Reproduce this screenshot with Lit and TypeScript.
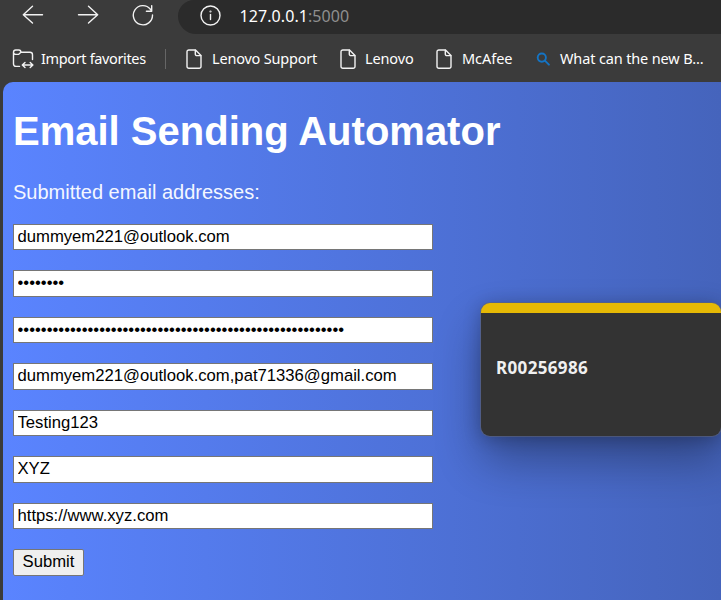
import { LitElement, html, css, svg } from "lit";
import { customElement } from "lit/decorators.js";

const page = svg`<path d="M2.800 1h6.700l5.500 5.500v11a1.800 1.800 0 0 1-1.800 1.800H2.800A1.800 1.800 0 0 1 1 17.500V2.800A1.800 1.800 0 0 1 2.800 1z"/><path d="M9.300 1.200v3.800a1.600 1.600 0 0 0 1.600 1.600h3.900"/>`;

const pageIcon = html`<svg class="line" width="16" height="20" viewBox="0 0 16 20">${page}</svg>`;

@customElement("browser-bar")
export class BrowserBar extends LitElement {
  static styles = css`
    :host { display: block; height: 82px; background: #3b3b3b; color: #fff; font-family: "Noto Sans", "Open Sans", sans-serif; white-space: nowrap; }
    svg { display: block; flex: none; }
    .line { fill: none; stroke: #f2f2f2; stroke-width: 1.4; stroke-linecap: round; stroke-linejoin: round; }
    .nav { display: flex; height: 34px; align-items: flex-start; padding-left: 22px; }
    .nav > svg { margin-top: 4px; }
    .forward { margin-left: 33px; }
    .reload { margin-left: 33px; }
    .address { flex: 1; height: 34px; box-sizing: border-box; margin-left: 24px; background: #2b2b2b; border-radius: 17px 0 0 19px; display: flex; padding: 5px 0 0 22px; }
    .url { margin: -1px 0 0 18.5px; font-size: 16px; line-height: 24px; letter-spacing: 0.08px; }
    .port { color: #8f8f8f; }
    .favorites { display: flex; height: 48px; align-items: center; padding: 1px 0 0 12px; box-sizing: border-box; font-size: 14.5px; line-height: 20px; }
    .favorites span { position: relative; top: -1px; }
    .import { width: 106px; letter-spacing: -0.36px; margin-left: 7px; }
    .favorites .divider { top: 0; width: 1px; height: 20px; margin: 0 20px 0 18px; background: #666; }
    .support { width: 106px; letter-spacing: -0.2px; margin-right: 22px; margin-left: 10px; }
    .lenovo { width: 49px; letter-spacing: -0.14px; margin-right: 22px; margin-left: 9px; }
    .mcafee { width: 51px; letter-spacing: -0.04px; margin-right: 23px; margin-left: 10px; }
    .search { fill: none; stroke: #1474c4; stroke-width: 1.9; stroke-linecap: round; }
    .bing { margin-left: 10px; letter-spacing: -0.14px; }
  `;

  render() {
    return html`
      <div class="nav">
        <svg class="line" width="22" height="22" viewBox="0 0 22 22"><path d="M20.5 10.7H1.3M10.5 2.3l-9.2 8.4 9.2 8.4"/></svg>
        <svg class="line forward" width="22" height="22" viewBox="0 0 22 22"><path d="M1.5 10.7h19.2M11.5 2.3l9.2 8.4-9.2 8.4"/></svg>
        <svg class="line reload" width="22" height="22" viewBox="0 0 22 22"><path d="M20.500 11A9.600 9.600 0 1 1 18.400 5.200L19.700 7M19.700 1.600V7.200H14.400"/></svg>
        <div class="address">
          <svg class="line" width="21" height="21" viewBox="0 0 21 21"><circle cx="10.5" cy="10.5" r="9.5"/><path d="M10.5 9.5v5"/><circle cx="10.5" cy="6.5" r=".4"/></svg>
          <span class="url">127.0.0.1<span class="port">:5000</span></span>
        </div>
      </div>
      <div class="favorites">
        <svg class="line" width="22" height="20" viewBox="0 0 22 20"><path d="M7.500 17.400H4A2.500 2.500 0 0 1 1.500 15V3.200A2.200 2.200 0 0 1 3.700 1H6.800A2.200 2.200 0 0 1 8.900 3.200H18A2.500 2.500 0 0 1 20.500 5.700V10.500M1.500 3.200A2.200 2.200 0 0 0 3.700 5.400H6.500L8.900 3.200M10.500 16H20.700M13 13.400L10.300 16l2.700 2.600M18.200 13.400l2.700 2.600-2.700 2.600"/></svg>
        <span class="import">Import favorites</span>
        <span class="divider"></span>
        ${pageIcon}<span class="support">Lenovo Support</span>
        ${pageIcon}<span class="lenovo">Lenovo</span>
        ${pageIcon}<span class="mcafee">McAfee</span>
        <svg class="search" width="14" height="14" viewBox="0 0 14 14"><circle cx="5.8" cy="5.600" r="4.100"/><path d="M8.900 8.700l4 4"/></svg>
        <span class="bing">What can the new B...</span>
      </div>
    `;
  }
}

@customElement("email-form")
export class EmailForm extends LitElement {
  static styles = css`
    :host { display: block; color: #fff; font-family: "Liberation Sans", Arial, sans-serif; white-space: nowrap; }
    h1 { margin: 0; font-size: 40px; line-height: 46px; }
    p { margin: 27px 0 0; font-size: 20px; line-height: 23px; color: #f4f7ff; }
    form { display: flex; flex-direction: column; align-items: flex-start; gap: 20px; margin-top: 19.75px; }
    input, button { display: block; box-sizing: border-box; height: 26.5px; margin: 0; font: 16.667px/19px "Liberation Sans", Arial, sans-serif; color: #000; }
    input { width: 420px; border: 1px solid #767676; border-radius: 0; background: #fff; padding: 1px 3.500px 2px; outline: none; }
    button { width: 71px; padding: 0 0 2px; border: 1px solid #767676; border-radius: 2px; background: #efefef; }
  `;

  private values = [
    "dummyem221@outlook.com",
    "•".repeat(8),
    "•".repeat(56),
    "dummyem221@outlook.com,pat71336@gmail.com",
    "Testing123",
    "XYZ",
    "https://www.xyz.com",
  ];

  render() {
    return html`
      <h1>Email Sending Automator</h1>
      <p>Submitted email addresses:</p>
      <form>
        ${this.values.map((v) => html`<input .value=${v} spellcheck="false" />`)}
        <button type="button">Submit</button>
      </form>
    `;
  }
}

@customElement("app-root")
export class AppRoot extends LitElement {
  static styles = css`
    :host { display: block; position: relative; width: 721px; height: 600px; overflow: hidden; background: #3b3b3b; }
    .page { box-sizing: border-box; height: 518px; margin-left: 3px; padding: 26px 0 0 10px; border-top-left-radius: 10px; background: linear-gradient(90deg, #5a84ff 0%, #4564bc 100%); }
    .note { position: absolute; left: 481px; top: 303px; width: 240px; height: 133px; box-sizing: border-box; border-top: 10px solid #e6b905; border-radius: 9px; background: #333; color: #f0f0f0; box-shadow: 0 0 0 1px rgba(95, 100, 120, 0.6), 0 24px 46px rgba(0, 0, 0, 0.32), 0 2px 18px rgba(0, 0, 0, 0.24); padding: 43px 0 0 15px; font: 700 17px/24px "Noto Sans", "Open Sans", sans-serif; letter-spacing: 0.35px; }
  `;

  render() {
    return html`
      <browser-bar></browser-bar>
      <main class="page"><email-form></email-form></main>
      <aside class="note">R00256986</aside>
    `;
  }
}
